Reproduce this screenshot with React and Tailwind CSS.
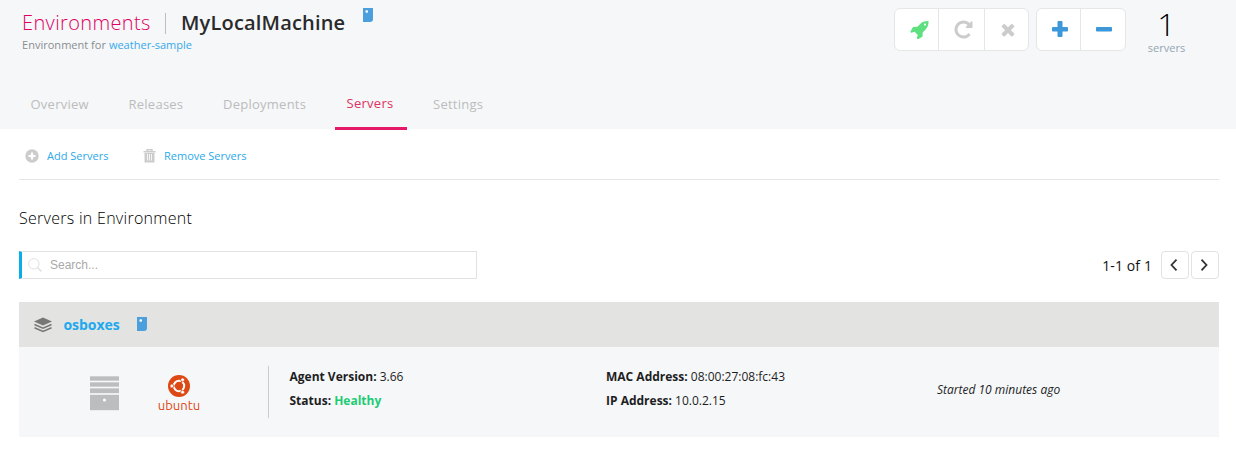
import React from 'react';

function TagIcon({ className }) {
  return (
    <svg className={className} width="11" height="14" viewBox="0 0 11 14">
      <path d="M0 0h10v11q0 3-3 3H0z" fill="#4b9fdd" />
      <rect x="2.500" y="2.200" width="2.500" height="2.500" rx="0.800" fill="#fff" />
    </svg>
  );
}

const REPEAT =
  'M1664 256v448q0 26-19 45t-45 19h-448q-42 0-59-40-17-39 14-69l138-138q-148-137-349-137-104 0-198.500 40.500t-163.500 109.500-109.500 163.500-40.500 198.500 40.500 198.500 109.500 163.500 163.500 109.500 198.500 40.500q119 0 225-52t179-147q7-10 23-12 15 0 25 9l137 138q9 8 9.500 20.500t-7.500 22.500q-109 132-264 204.500t-327 72.500q-156 0-298-61t-245-164-164-245-61-298 61-298 164-245 245-164 298-61q147 0 284.500 55.500t244.500 156.500l130-129q29-31 70-14 39 17 39 59z';
const ROCKET =
  'M1440 320q0-40-28-68t-68-28-68 28-28 68 28 68 68 28 68-28 28-68zm224-288q0 249-75.500 430.500t-253.500 360.500q-81 80-195 176l-20 379q-2 16-16 26l-384 224q-7 4-16 4-12 0-23-9l-64-64q-13-14-8-32l85-276-281-281-276 85q-3 1-9 1-14 0-23-9l-64-64q-17-19-5-39l224-384q10-14 26-16l379-20q96-114 176-195 188-187 358-258t431-71q14 0 24 9.500t10 22.500z';
const TIMES =
  'M1490 1322q0 40-28 68l-136 136q-28 28-68 28t-68-28l-294-294-294 294q-28 28-68 28t-68-28l-136-136q-28-28-28-68t28-68l294-294-294-294q-28-28-28-68t28-68l136-136q28-28 68-28t68 28l294 294 294-294q28-28 68-28t68 28l136 136q28 28 28 68t-28 68l-294 294 294 294q28 28 28 68z';

function Header() {
  return (
    <header className="flex h-[129px] flex-col justify-between bg-[#f5f7f9]">
      <div className="flex h-[60px] items-start">
        <div className="w-[872px] pl-[22px] pt-[9px]">
          <div className="flex h-7 items-start whitespace-nowrap">
            <span className="w-[143px] text-[20px] font-light leading-7 tracking-[0.37px] text-[#e00060]">Environments</span>
            <span className="mt-1 h-[21px] w-px bg-[#b9bec4]" />
            <span className="ml-[15px] w-[181px] text-[20px] font-semibold leading-7 tracking-[0.18px] text-[#2a2a2a]">MyLocalMachine</span>
            <TagIcon className="mt-[-1px] ml-px" />
          </div>
          <p className="text-[11px] leading-4 tracking-[0.02px] text-[#898e91]">
            Environment for <a className="text-[#35a9e9]">weather-sample</a>
          </p>
        </div>
        <div className="ml-[22px] mt-2 flex h-[43px] w-[135px] overflow-hidden rounded-md border border-[#e5e6e8] bg-white">
          <button className="flex w-[44px] items-center justify-center border-r border-[#e5e6e8] pt-[2px] pl-[7px]">
            <svg width="20" height="20" viewBox="0 0 1792 1792" fill="#5fe080"><path d={ROCKET} /></svg>
          </button>
          <button className="flex w-[46px] items-center justify-center border-r border-[#e5e6e8] pl-1">
            <svg width="21" height="21" viewBox="0 0 1792 1792" fill="#ccc"><path d={REPEAT} /></svg>
          </button>
          <button className="flex w-[43px] items-center justify-center pl-0.5">
            <svg width="20" height="20" viewBox="0 0 1792 1880" fill="#ccc"><path d={TIMES} /></svg>
          </button>
        </div>
        <div className="ml-[7px] mt-2 flex h-[43px] w-[90px] overflow-hidden rounded-md border border-[#e5e6e8] bg-white">
          <button className="flex w-[44px] items-center justify-center border-r border-[#e5e6e8] pl-[3px] pb-[2px]">
            <svg width="16" height="16" viewBox="0 0 16 16" fill="#3d98d9"><rect y="6" width="16" height="4.500" rx="1" /><rect x="5.500" width="5" height="16" rx="1" /></svg>
          </button>
          <button className="flex w-[44px] items-center justify-center pl-px pb-[2px]">
            <svg width="16" height="16" viewBox="0 0 16 16" fill="#3d98d9"><rect y="6" width="16" height="4.500" rx="1" /></svg>
          </button>
        </div>
        <div className="ml-[10px] flex w-[61px] flex-col items-center pt-2">
          <span className="h-8 text-[32px] font-light leading-8 text-black">1</span>
          <span className="text-[11px] leading-4 text-[#96a5b2]">servers</span>
        </div>
      </div>
      <nav className="flex h-[50px] pl-[30.500px] text-[13px] leading-[18px] tracking-[0.25px] text-[#bcbcbc] whitespace-nowrap">
        <a className="w-[98px] pt-4">Overview</a>
        <a className="w-[94.500px] pt-4">Releases</a>
        <a className="w-[112px] pt-4">Deployments</a>
        <a className="mb-[-1px] w-[72px] border-b-3 border-[#e6186a] pt-[15px] pr-[2px] text-center text-[#e0315f]">Servers</a>
        <a className="ml-[26px] pt-4">Settings</a>
      </nav>
    </header>
  );
}

function Toolbar() {
  return (
    <div className="mr-[17px] ml-[19px] flex h-[51px] items-center border-b border-[#e5e5e5] text-[11px] text-[#2da9ea] whitespace-nowrap">
      <a className="mt-1 flex w-[124px] items-center pl-[6px]">
        <svg className="mr-2" width="14" height="14" viewBox="0 0 14 14"><circle cx="7" cy="7" r="6.700" fill="#ccc" /><path d="M7 3.500v7M3.500 7h7" stroke="#fff" strokeWidth="2.200" /></svg>
        Add Servers
      </a>
      <a className="mt-1 flex items-center">
        <svg className="mr-2 shrink-0" width="13" height="14" viewBox="0 0 13 14">
          <path d="M4 2V.7h5V2M.5 2.700h12" fill="none" stroke="#ccc" strokeWidth="1.400" />
          <path d="M1.500 4h10v9.500h-10z" fill="#ccc" />
          <path d="M4.500 5v6.500M6.500 5v6.500M8.500 5v6.500" stroke="#fff" strokeWidth="0.800" />
        </svg>
        Remove Servers
      </a>
    </div>
  );
}

function ServerCard() {
  return (
    <section className="mt-[23px] ml-[19px] w-[1200px] bg-[#f5f7f9]">
      <div className="flex h-[45px] items-center bg-[#e3e3e1] pl-[15px]">
        <svg width="18" height="16" viewBox="0 0 18 16">
          <path d="M9 0.500 18 4.500 9 8.500 0 4.500z" fill="#777" />
          <path d="M.5 7.500 9 11.200 17.500 7.500M.5 10.700 9 14.400 17.500 10.700" fill="none" stroke="#777" strokeWidth="1.500" />
        </svg>
        <span className="ml-[11.500px] w-[73.500px] text-[14px] font-bold tracking-[-0.05px] text-[#20a9ef]">osboxes</span>
        <TagIcon className="mt-[-1px]" />
      </div>
      <div className="flex h-[90px] text-[12px] leading-6 text-[#1e1e1e] whitespace-nowrap">
        <svg className="mt-[29px] ml-[71px]" width="29" height="35" viewBox="0 0 29 35" fill="#bcbdbf">
          <rect width="29" height="34.500" fill="#e2e3e4" />
          <rect y="0.500" width="29" height="4" /><rect y="6.500" width="29" height="4" /><rect y="12.500" width="29" height="4.500" /><rect y="19" width="29" height="15" />
          <path d="M0 5.500h29M0 11.500h29M0 18h29" stroke="#f5f7f9" strokeWidth="1.200" />
          <circle cx="14.500" cy="24" r="1.600" fill="#fff" />
        </svg>
        <div className="mt-[28px] ml-[38px] flex w-[44px] flex-col items-center">
          <svg width="22" height="22" viewBox="0 0 22 22">
            <circle cx="11" cy="11" r="11" fill="#dd4814" />
            <circle cx="11" cy="11" r="5.200" fill="none" stroke="#fff" strokeWidth="2" />
            <path d="M11 11H3M11 11l4-7M11 11l4 7" stroke="#dd4814" strokeWidth="1.200" />
            <g fill="#fff" stroke="#dd4814" strokeWidth="0.700"><circle cx="3.900" cy="11" r="1.900" /><circle cx="14.600" cy="4.800" r="1.900" /><circle cx="14.600" cy="17.200" r="1.900" /></g>
          </svg>
          <span className="mt-px font-[Ubuntu,'Noto_Sans',sans-serif] text-[13px] leading-[14px] text-[#dd4814]">ubuntu</span>
        </div>
        <div className="mt-[19px] ml-[67px] h-[52px] w-[339px] border-l border-[#ccc] pl-[20.500px] -mr-px">
          <p className="-mt-px"><b>Agent Version:</b> 3.66</p>
          <p><b>Status:</b> <b className="text-[#1dcb75]">Healthy</b></p>
        </div>
        <div className="mt-[18px] w-[331px]">
          <p><b>MAC Address:</b> 08:00:27:08:fc:43</p>
          <p><b>IP Address:</b> 10.0.2.15</p>
        </div>
        <p className="mt-[31px] italic">Started 10 minutes ago</p>
      </div>
    </section>
  );
}

export default function App() {
  return (
    <main className="h-[454px] w-[1236px] overflow-hidden bg-white font-['Open_Sans',sans-serif]">
      <Header />
      <Toolbar />
      <h2 className="mt-[27px] ml-[19px] text-[16px] font-light leading-[22px] tracking-[0.28px] text-black">Servers in Environment</h2>
      <div className="mt-[22px] mr-[17px] ml-[19px] flex h-7 items-center justify-between">
        <div className="flex h-7 w-[458px] items-center border border-l-3 border-[#e2e2e2] border-l-[#08aeea] pl-1.5 font-['Liberation_Sans',sans-serif] text-[12px] text-[#a9a9a9]">
          <svg className="mr-2" width="14" height="14" viewBox="0 0 14 14" fill="none" stroke="#e0e0e0"><circle cx="5.800" cy="5.800" r="5.200" /><path d="m9.500 9.500 4 4" strokeWidth="1.500" /></svg>
          Search...
        </div>
        <div className="flex items-center">
          <span className="mr-[9px] text-[14px] font-medium text-[#111] tracking-[0.1px]">1-1 of 1</span>
          <button className="mr-0.5 flex h-7 w-7 items-center justify-center rounded border border-[#e2e2e2] pr-[2px]">
            <svg width="8" height="12" viewBox="0 0 8 12" fill="none" stroke="#333" strokeWidth="1.800"><path d="M6.500.7 1.500 6l5 5.300" /></svg>
          </button>
          <button className="flex h-7 w-7 items-center justify-center rounded border border-[#e2e2e2] pr-px">
            <svg width="8" height="12" viewBox="0 0 8 12" fill="none" stroke="#333" strokeWidth="1.800"><path d="m.5.700 5 5.300-5 5.300" /></svg>
          </button>
        </div>
      </div>
      <ServerCard />
    </main>
  );
}
